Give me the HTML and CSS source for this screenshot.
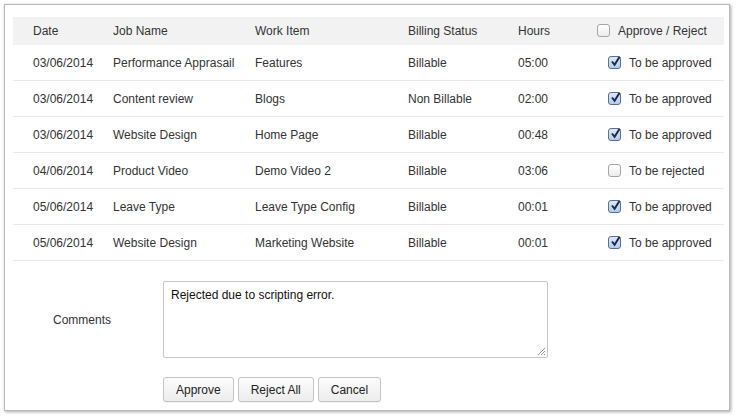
FILE: index.html
```html
<!DOCTYPE html>
<html>
<head>
<meta charset="utf-8">
<link rel="stylesheet" href="styles.css">
</head>
<body>
<div class="card">
  <table class="grid">
    <colgroup>
      <col class="c-date"><col class="c-job"><col class="c-work"><col class="c-bill"><col class="c-hours"><col class="c-appr">
    </colgroup>
    <thead>
      <tr>
        <th>Date</th><th>Job Name</th><th>Work Item</th><th>Billing Status</th><th>Hours</th>
        <th class="appr-h"><span class="cb"></span><span class="lbl">Approve / Reject</span></th>
      </tr>
    </thead>
    <tbody>
      <tr><td>03/06/2014</td><td>Performance Apprasail</td><td>Features</td><td>Billable</td><td>05:00</td><td class="appr"><span class="cb on"><svg viewBox="0 0 13 13"><path d="M3 6.5 L5.6 9.8 L10.6 1.8" fill="none" stroke="#1b2a4a" stroke-width="2"/></svg></span><span class="lbl">To be approved</span></td></tr>
      <tr><td>03/06/2014</td><td>Content review</td><td>Blogs</td><td>Non Billable</td><td>02:00</td><td class="appr"><span class="cb on"><svg viewBox="0 0 13 13"><path d="M3 6.5 L5.6 9.8 L10.6 1.8" fill="none" stroke="#1b2a4a" stroke-width="2"/></svg></span><span class="lbl">To be approved</span></td></tr>
      <tr><td>03/06/2014</td><td>Website Design</td><td>Home Page</td><td>Billable</td><td>00:48</td><td class="appr"><span class="cb on"><svg viewBox="0 0 13 13"><path d="M3 6.5 L5.6 9.8 L10.6 1.8" fill="none" stroke="#1b2a4a" stroke-width="2"/></svg></span><span class="lbl">To be approved</span></td></tr>
      <tr><td>04/06/2014</td><td>Product Video</td><td>Demo Video 2</td><td>Billable</td><td>03:06</td><td class="appr"><span class="cb"></span><span class="lbl">To be rejected</span></td></tr>
      <tr><td>05/06/2014</td><td>Leave Type</td><td>Leave Type Config</td><td>Billable</td><td>00:01</td><td class="appr"><span class="cb on"><svg viewBox="0 0 13 13"><path d="M3 6.5 L5.6 9.8 L10.6 1.8" fill="none" stroke="#1b2a4a" stroke-width="2"/></svg></span><span class="lbl">To be approved</span></td></tr>
      <tr><td>05/06/2014</td><td>Website Design</td><td>Marketing Website</td><td>Billable</td><td>00:01</td><td class="appr"><span class="cb on"><svg viewBox="0 0 13 13"><path d="M3 6.5 L5.6 9.8 L10.6 1.8" fill="none" stroke="#1b2a4a" stroke-width="2"/></svg></span><span class="lbl">To be approved</span></td></tr>
    </tbody>
  </table>
  <div class="comments">
    <div class="c-label">Comments</div>
    <div class="ta">Rejected due to scripting error.<svg class="grip" viewBox="0 0 10 10"><path d="M9 2 L2 9 M9 5 L5 9 M9 8 L8 9" stroke="#999" stroke-width="1" fill="none"/></svg></div>
  </div>
  <div class="buttons">
    <button class="btn">Approve</button>
    <button class="btn">Reject All</button>
    <button class="btn">Cancel</button>
  </div>
</div>
</body>
</html>
```
FILE: styles.css
```css
html, body { margin: 0; padding: 0; background: #fff; }
body {
  font-family: "Liberation Sans", Arial, sans-serif;
  font-size: 12px;
  color: #333;
  width: 737px;
  height: 418px;
  overflow: hidden;
}
.card {
  margin: 4px 0 0 4px;
  width: 726px;
  height: 407px;
  border: 1px solid #b9b9b9;
  box-shadow: 1px 1px 3px rgba(0,0,0,0.35);
  padding: 12px 0 0 8px;
  box-sizing: border-box;
  background: #fff;
}
.grid {
  border-collapse: collapse;
  table-layout: fixed;
  width: 711px;
}
.c-date { width: 80px; }
.c-job { width: 142px; }
.c-work { width: 153px; }
.c-bill { width: 110px; }
.c-hours { width: 79px; }
.c-appr { width: 147px; }
.grid th {
  background: #f2f2f2;
  font-weight: normal;
  text-align: left;
  height: 28px;
  padding: 0 0 0 20px;
  color: #333;
}
.grid td {
  height: 35px;
  padding: 0 0 0 20px;
  border-bottom: 1px solid #e9e9e9;
  white-space: nowrap;
}
.grid th.appr-h { padding-left: 20px; }
.grid td.appr { padding-left: 31px; }
.cb {
  display: inline-block;
  width: 11px;
  height: 11px;
  border: 1px solid #a5a5a5;
  border-radius: 3px;
  background: linear-gradient(#ffffff, #ececec);
  vertical-align: -2px;
  position: relative;
  box-sizing: content-box;
}
.cb.on {
  border-color: #5b6f96;
  background: linear-gradient(#dfe9f8, #b7cbe9);
}
.cb svg {
  position: absolute;
  left: 0;
  top: -2px;
  width: 13px;
  height: 13px;
}
.lbl { margin-left: 8px; }
.comments {
  display: flex;
  align-items: center;
  margin-top: 20px;
}
.c-label {
  width: 150px;
  padding-left: 40px;
  box-sizing: border-box;
}
.ta {
  width: 385px;
  height: 77px;
  border: 1px solid #c3c7d1;
  border-radius: 2px;
  box-sizing: border-box;
  padding: 6px 7px;
  color: #111;
  position: relative;
}
.grip {
  position: absolute;
  right: 1px;
  bottom: 1px;
  width: 10px;
  height: 10px;
}
.buttons {
  display: flex;
  gap: 4px;
  margin: 19px 0 0 150px;
}
.btn {
  font-family: "Liberation Sans", Arial, sans-serif;
  font-size: 12px;
  color: #222;
  height: 25px;
  padding: 0 12px;
  border: 1px solid #c4c4c4;
  border-radius: 3px;
  background: linear-gradient(#fdfdfd, #ececec);
  box-shadow: 0 1px 0 rgba(0,0,0,0.05);
}
```
